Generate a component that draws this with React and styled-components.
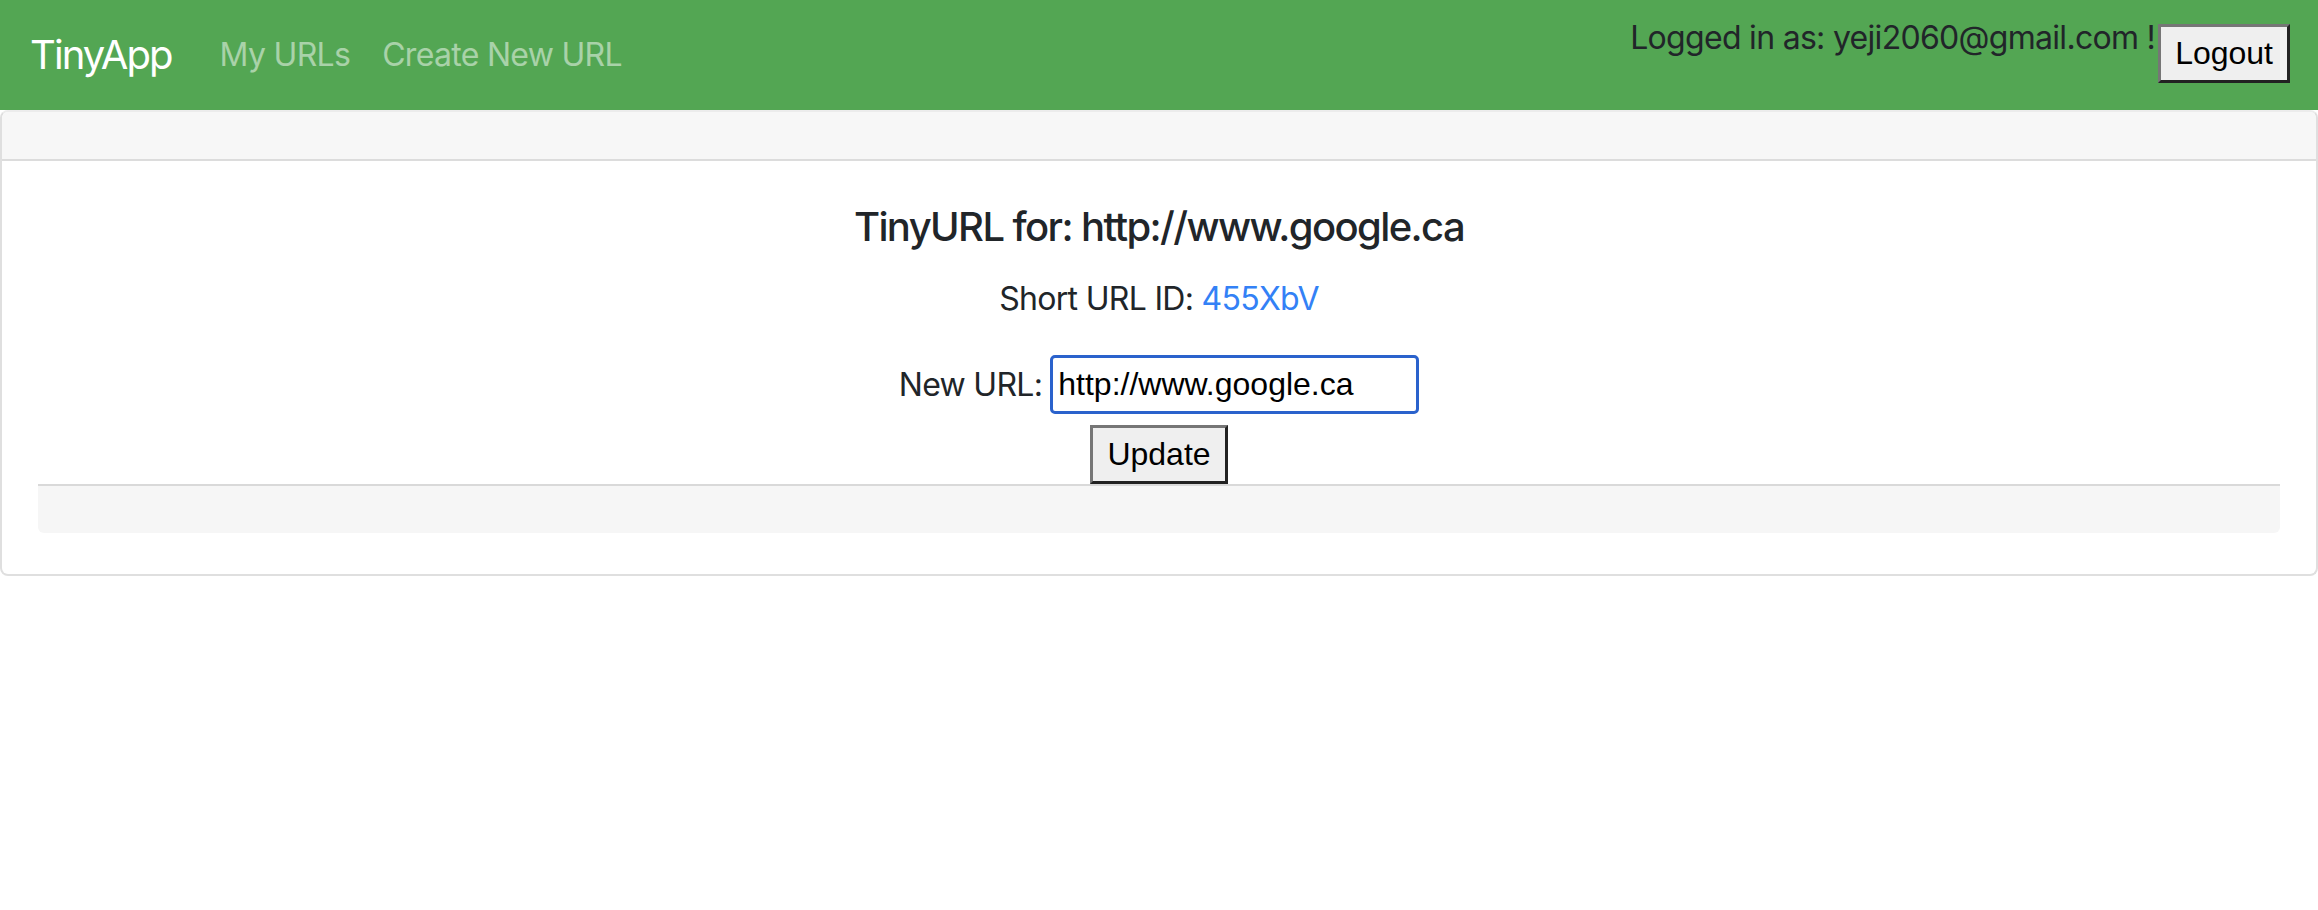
import React from 'react';
import styled, { createGlobalStyle } from 'styled-components';

const Global = createGlobalStyle`
  html, body { margin: 0; padding: 0; background: #fff; }
  body { font-family: Inter, "Noto Sans", sans-serif; color: #212529; letter-spacing: -0.7px; }
  * { box-sizing: border-box; }
`;

const Nav = styled.nav`
  height: 110px;
  background: #53a653;
  display: flex;
  align-items: center;
  justify-content: space-between;
  padding: 0 28px 0 30px;
`;

const NavLeft = styled.div`
  display: flex;
  align-items: center;
`;

const Brand = styled.a`
  font-size: 40px;
  line-height: 60px;
  letter-spacing: -1.9px;
  color: #fff;
  text-decoration: none;
  margin-right: 32px;
`;

const NavLink = styled.a`
  font-size: 32px;
  line-height: 48px;
  color: rgba(255, 255, 255, 0.5);
  text-decoration: none;
  padding: 0 16px;
`;

const UserArea = styled.div`
  align-self: flex-start;
  display: flex;
  align-items: flex-start;
  padding-top: 14px;
`;

const UserText = styled.span`
  font-size: 32px;
  line-height: 48px;
  color: #212529;
`;

const PlainButton = styled.button`
  font-family: "Liberation Sans", Arial, sans-serif;
  font-size: 32px;
  line-height: normal;
  letter-spacing: 0;
  color: #000;
  background: #efefef;
  border: 3px solid;
  border-color: #767676 #222 #222 #767676;
  border-radius: 0;
  padding: 8px 14px;
  margin: ${(p) => p.$mt || 0}px 0 0 ${(p) => p.$ml || 0}px;
  cursor: pointer;
`;

const Card = styled.section`
  border: 2px solid #dfdfdf;
  border-top-color: #ececec;
  border-radius: 8px;
  overflow: hidden;
`;

const CardHeader = styled.div`
  height: 49px;
  background: #f7f7f7;
  border-bottom: 2px solid #dcdcdc;
`;

const CardBody = styled.div`
  padding: 42px 36px 41px;
  text-align: center;
`;

const Title = styled.h5`
  margin: 0 0 24px;
  font-size: 40px;
  line-height: 48px;
  font-weight: 550;
  letter-spacing: -1.6px;
`;

const Info = styled.p`
  margin: 0 0 32px;
  font-size: 32px;
  line-height: 48px;
`;

const IdLink = styled.a`
  color: #3381f6;
  text-decoration: none;
`;

const FormRow = styled.form`
  display: flex;
  flex-direction: column;
  align-items: center;
`;

const FieldRow = styled.div`
  display: flex;
  align-items: center;
  justify-content: center;
  gap: 8px;
`;

const Label = styled.label`
  font-size: 32px;
  line-height: 48px;
`;

const Input = styled.input`
  width: 369px;
  height: 59px;
  border: 3px solid #2a62cc;
  border-radius: 5px;
  padding: 0 5px;
  font-family: "Liberation Sans", Arial, sans-serif;
  font-size: 32px;
  letter-spacing: 0;
  color: #000;
  outline: none;
`;

const Footer = styled.div`
  height: 49px;
  background: #f6f6f6;
  border-top: 2px solid #d9d9d9;
  border-radius: 0 0 6px 6px;
`;

export default function App() {
  return (
    <>
      <Global />
      <Nav>
        <NavLeft>
          <Brand href="#">TinyApp</Brand>
          <NavLink href="#">My URLs</NavLink>
          <NavLink href="#">Create New URL</NavLink>
        </NavLeft>
        <UserArea>
          <UserText>Logged in as: yeji2060@gmail.com !</UserText>
          <PlainButton $mt={10} $ml={3}>Logout</PlainButton>
        </UserArea>
      </Nav>
      <Card>
        <CardHeader />
        <CardBody>
          <Title>TinyURL for: http://www.google.ca</Title>
          <Info>
            Short URL ID: <IdLink href="#">455XbV</IdLink>
          </Info>
          <FormRow onSubmit={(e) => e.preventDefault()}>
            <FieldRow>
              <Label htmlFor="newurl">New URL:</Label>
              <Input id="newurl" type="text" defaultValue="http://www.google.ca" />
            </FieldRow>
            <PlainButton type="submit" $mt={11}>Update</PlainButton>
          </FormRow>
          <Footer />
        </CardBody>
      </Card>
    </>
  );
}
